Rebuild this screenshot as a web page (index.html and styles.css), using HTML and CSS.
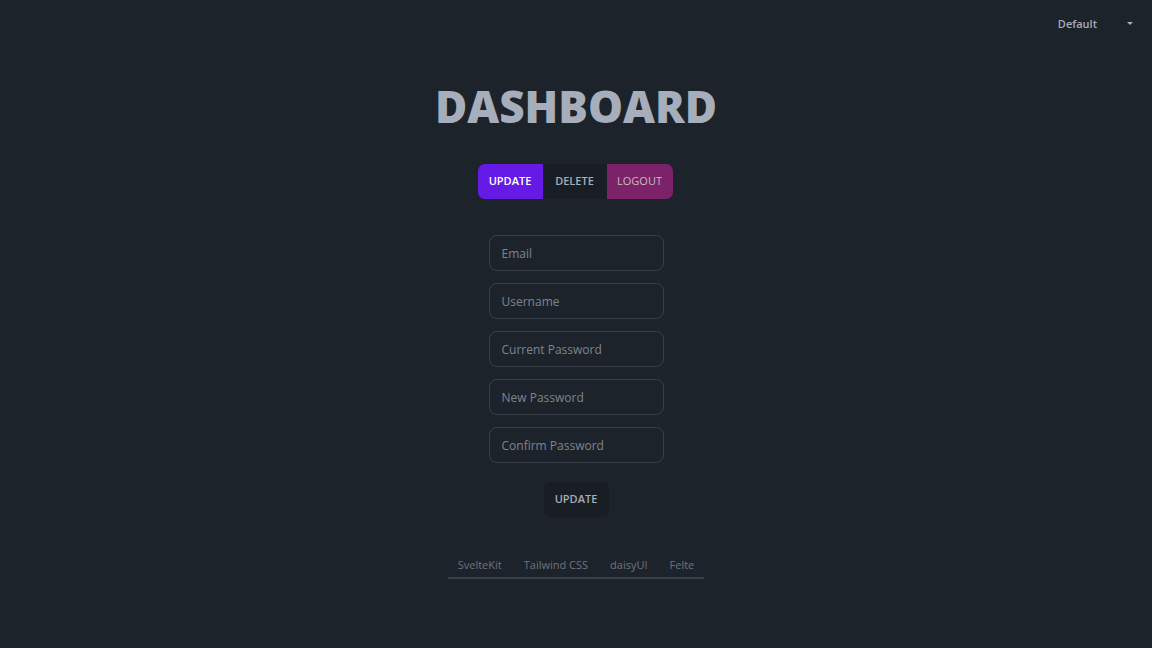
FILE: index.html
```html
<!DOCTYPE html>
<html>
<head>
<meta charset="utf-8">
<link rel="stylesheet" href="styles.css">
</head>
<body>
<header class="topbar">
  <div class="theme-select">
    <span>Default</span>
    <svg class="caret" width="8" height="5" viewBox="0 0 8 5"><path d="M1 1 L4 4 L7 1 Z" fill="#a6adbb"/></svg>
  </div>
</header>
<main class="main">
  <h1 class="title">DASHBOARD</h1>
  <div class="btn-group">
    <button class="btn btn-primary">UPDATE</button>
    <button class="btn btn-dark">DELETE</button>
    <button class="btn btn-logout">LOGOUT</button>
  </div>
  <form class="form">
    <input class="input" placeholder="Email">
    <input class="input" placeholder="Username">
    <input class="input" placeholder="Current Password">
    <input class="input" placeholder="New Password">
    <input class="input" placeholder="Confirm Password">
    <button type="button" class="btn btn-submit">UPDATE</button>
  </form>
  <nav class="tabs">
    <a class="tab">SvelteKit</a>
    <a class="tab">Tailwind CSS</a>
    <a class="tab">daisyUI</a>
    <a class="tab">Felte</a>
  </nav>
</main>
</body>
</html>
```
FILE: styles.css
```css
* { box-sizing: border-box; }
html, body { margin: 0; padding: 0; }
body {
  background: #1d232a;
  color: #a6adbb;
  font-family: "Open Sans", "Noto Sans", sans-serif;
  width: 1152px;
  height: 648px;
  overflow: hidden;
}
.topbar {
  display: flex;
  justify-content: flex-end;
  height: 48px;
  padding: 0 18px 0 0;
}
.theme-select {
  display: flex;
  align-items: center;
  gap: 29px;
  height: 46px;
  font-size: 11px;
  font-weight: 600;
  color: #a6adbb;
}
.main {
  display: flex;
  flex-direction: column;
  align-items: center;
}
.title {
  margin: 30px 0 0 0;
  font-size: 44px;
  font-weight: 800;
  line-height: 56px;
  color: #a6adbb;
}
.btn-group {
  display: flex;
  margin-top: 30px;
  margin-right: 2px;
}
.btn {
  border: none;
  font-family: inherit;
  font-size: 11px;
  font-weight: 600;
  height: 35px;
  padding: 0 0 3px 0;
  cursor: pointer;
}
.btn-primary {
  background: #661ae6;
  color: #ffffff;
  border-radius: 7px 0 0 7px;
  width: 65px;
}
.btn-dark {
  background: #191e24;
  color: #a6adbb;
  width: 64px;
}
.btn-logout {
  background: #7b2269;
  color: #c6bcc6;
  border-radius: 0 7px 7px 0;
  width: 66px;
  font-weight: 500;
}
.form {
  display: flex;
  flex-direction: column;
  align-items: center;
  gap: 12px;
  margin-top: 36px;
}
.input {
  width: 175px;
  height: 36px;
  background: #1d232a;
  border: 1px solid #39404a;
  border-radius: 8px;
  padding: 1px 12px 0 12px;
  font-family: inherit;
  font-size: 12px;
  color: #a6adbb;
  outline: none;
}
.input::placeholder { color: #7d8491; }
.btn-submit {
  background: #191e24;
  color: #a6adbb;
  border-radius: 6px;
  width: 65px;
  margin-top: 7px;
}
.tabs {
  display: flex;
  margin-top: 36px;
  border-bottom: 2px solid #383f48;
  width: 256px;
  justify-content: center;
}
.tab {
  font-size: 11px;
  color: #6d7480;
  padding: 0 11px 1px 11px;
  line-height: 23px;
  white-space: nowrap;
}
```
